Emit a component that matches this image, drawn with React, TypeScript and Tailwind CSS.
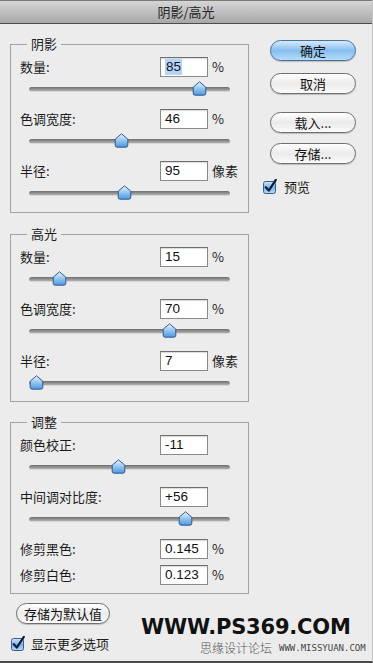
import React from "react";

type Row = { label: string; value: string; unit?: string; thumb?: number; selected?: boolean };
type Group = { title: string; rows: Row[]; pb: string; mt: string };

const CJK = "font-['Noto_Sans_CJK_SC','Noto_Sans',sans-serif]";

const groups: Group[] = [
  {
    title: "阴影",
    mt: "mt-0",
    pb: "pb-[12px]",
    rows: [
      { label: "数量:", value: "85", unit: "%", thumb: 199, selected: true },
      { label: "色调宽度:", value: "46", unit: "%", thumb: 121 },
      { label: "半径:", value: "95", unit: "像素", thumb: 124 },
    ],
  },
  {
    title: "高光",
    mt: "mt-[21px]",
    pb: "pb-[11px]",
    rows: [
      { label: "数量:", value: "15", unit: "%", thumb: 59 },
      { label: "色调宽度:", value: "70", unit: "%", thumb: 169 },
      { label: "半径:", value: "7", unit: "像素", thumb: 36 },
    ],
  },
];

function Thumb() {
  return (
    <svg width="15" height="15" viewBox="0 0 15 15">
      <defs>
        <linearGradient id="tg" x1="0" y1="0" x2="0" y2="1">
          <stop offset="0" stopColor="#eef7ff" />
          <stop offset="0.45" stopColor="#9ccaf3" />
          <stop offset="1" stopColor="#4f96df" />
        </linearGradient>
      </defs>
      <path
        d="M7.5 0.8 L13.8 6.2 L13.8 12.2 Q13.8 14.2 11.8 14.2 L3.2 14.2 Q1.2 14.2 1.2 12.2 L1.2 6.2 Z"
        fill="url(#tg)"
        stroke="#2e5b8f"
        strokeWidth="1"
        strokeLinejoin="round"
      />
    </svg>
  );
}

function Slider({ thumb }: { thumb: number }) {
  return (
    <div className="relative ml-[9px] mt-[5px] h-[14px] w-[201px] flex items-center">
      <div className="h-[5px] w-full rounded-full bg-linear-to-b from-[#6e6e6e] to-[#b2b2b2] border-b border-[#d6d6d6]" />
      <div className="absolute top-[-1px]" style={{ left: thumb - 7 - 29 }}>
        <Thumb />
      </div>
    </div>
  );
}

function ValueRow({ row }: { row: Row }) {
  return (
    <div className="flex items-center h-[20px]">
      <div className={`w-[140px] text-[13px] text-[#1c1c1c] ${CJK}`}>{row.label}</div>
      <div className="w-[48px] h-[20px] bg-white border border-[#8a8a8a] border-t-[#6e6e6e] shadow-[inset_0_1px_1px_rgba(0,0,0,0.15)] pl-[4px] flex items-center text-[13.5px] text-[#111] font-['Liberation_Sans',Arial,sans-serif]">
        {row.selected ? <span className="bg-[#b5d4fd] px-[1px] leading-[16px]">{row.value}</span> : <span>{row.value}</span>}
      </div>
      {row.unit && <div className={`ml-[4px] text-[13px] text-[#1c1c1c] ${CJK}`}>{row.unit}</div>}
    </div>
  );
}

function GroupBox({ title, children, className }: { title: string; children: React.ReactNode; className: string }) {
  return (
    <div className={`relative w-[239px] border border-[#a3a3a3] pl-[9px] pt-[12px] ${className}`}>
      <div className={`absolute left-[16px] top-[-10px] bg-[#ececec] px-[4px] text-[13px] leading-[18px] text-[#1c1c1c] ${CJK}`}>
        {title}
      </div>
      {children}
    </div>
  );
}

function AquaButton({ label, primary, className }: { label: string; primary?: boolean; className?: string }) {
  const base = primary
    ? "bg-linear-to-b from-[#d7ebfc] via-[#86bdf0] to-[#b6dcfb] border-[#46719f]"
    : "bg-linear-to-b from-[#ffffff] via-[#ebebeb] to-[#fafafa] border-[#6f6f6f]";
  return (
    <div
      className={`h-[21px] rounded-full border flex items-center justify-center text-[13px] text-[#111] shadow-[0_1px_1px_rgba(0,0,0,0.2)] ${CJK} ${base} ${className ?? ""}`}
    >
      {label}
    </div>
  );
}

function CheckBox() {
  return (
    <svg width="15" height="15" viewBox="0 0 15 15">
      <defs>
        <linearGradient id="cb" x1="0" y1="0" x2="0" y2="1">
          <stop offset="0" stopColor="#d2e8fc" />
          <stop offset="0.5" stopColor="#7ab4ec" />
          <stop offset="1" stopColor="#b2dafb" />
        </linearGradient>
      </defs>
      <rect x="0.5" y="2.5" width="12" height="12" rx="2" fill="url(#cb)" stroke="#3b5f88" />
      <path d="M2.8 8.2 L5.8 11.6 L12.8 0.8" stroke="#0e1d3a" strokeWidth="2.2" fill="none" strokeLinecap="round" strokeLinejoin="round" />
    </svg>
  );
}

export default function App() {
  return (
    <div className="relative w-[373px] h-[663px] overflow-hidden bg-[#ececec] border-r border-[#c4c4c4] border-b-2 border-b-[#4a4a4a]">
      {/* title bar */}
      <div className={`h-[24px] bg-linear-to-b from-[#d6d6d6] to-[#a8a8a8] border-t border-[#7a7a7a] border-b border-b-[#4d4d4d] flex items-center justify-center text-[13px] text-[#222] ${CJK}`}>
        阴影/高光
      </div>

      <div className="flex">
        {/* left column */}
        <div className="pl-[10px] pt-[20px]">
          {groups.map((g) => (
            <GroupBox key={g.title} title={g.title} className={`${g.mt} ${g.pb}`}>
              <div className="flex flex-col gap-[13px]">
                {g.rows.map((r, i) => (
                  <div key={i}>
                    <ValueRow row={r} />
                    <Slider thumb={r.thumb!} />
                  </div>
                ))}
              </div>
            </GroupBox>
          ))}

          <GroupBox title="调整" className="mt-[20px] pb-[8px]">
            <div className="flex flex-col">
              <ValueRow row={{ label: "颜色校正:", value: "-11" }} />
              <Slider thumb={118} />
              <div className="mt-[13px]">
                <ValueRow row={{ label: "中间调对比度:", value: "+56" }} />
                <Slider thumb={185} />
              </div>
              <div className="mt-[13px]">
                <ValueRow row={{ label: "修剪黑色:", value: "0.145", unit: "%" }} />
              </div>
              <div className="mt-[6px]">
                <ValueRow row={{ label: "修剪白色:", value: "0.123", unit: "%" }} />
              </div>
            </div>
          </GroupBox>

          <AquaButton label="存储为默认值" className="mt-[9px] ml-[6px] w-[94px]" />

          <div className="mt-[10px] ml-[1px] flex items-center gap-[5px]">
            <CheckBox />
            <span className={`text-[13px] text-[#1c1c1c] ${CJK}`}>显示更多选项</span>
          </div>
        </div>

        {/* right column */}
        <div className="ml-[14px] pt-[16px] flex flex-col">
          <AquaButton label="确定" primary className="ml-[7px] w-[86px]" />
          <AquaButton label="取消" className="ml-[7px] w-[86px] mt-[12px]" />
          <AquaButton label="载入..." className="ml-[7px] w-[86px] mt-[18px]" />
          <AquaButton label="存储..." className="ml-[7px] w-[86px] mt-[10px]" />
          <div className="mt-[13px] flex items-center gap-[6px]">
            <CheckBox />
            <span className={`text-[13px] text-[#1c1c1c] ${CJK}`}>预览</span>
          </div>
        </div>
      </div>

      {/* watermark */}
      <div className="absolute left-[141px] top-[618px] text-[21px] leading-[19px] font-bold text-[#111] font-['DejaVu_Sans',sans-serif] tracking-[-0.2px]">
        WWW.PS369.COM
      </div>
      <div className="absolute left-[200px] top-[641px] h-[14px] flex items-center gap-[7px]">
        <span className={`text-[12px] leading-[14px] text-[#555] font-light ${CJK}`}>思缘设计论坛</span>
        <span className="text-[9px] leading-[12px] text-[#444] font-['DejaVu_Sans_Mono',monospace]">WWW.MISSYUAN.COM</span>
      </div>
    </div>
  );
}
